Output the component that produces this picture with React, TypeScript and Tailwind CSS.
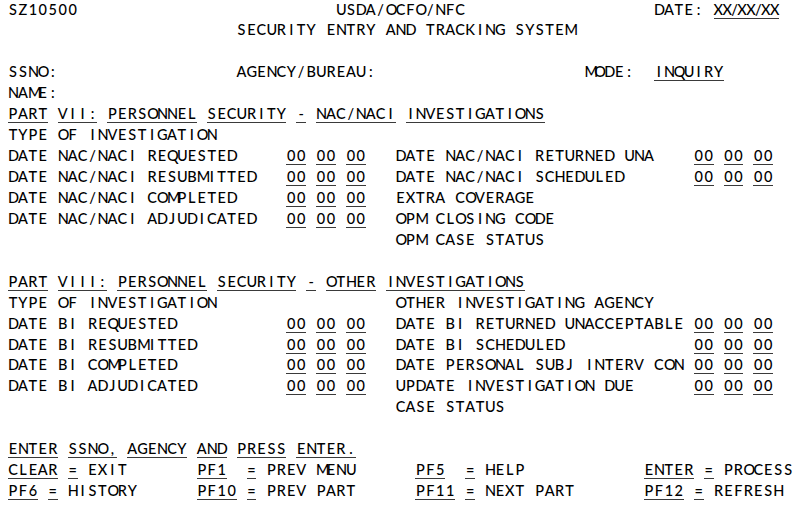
type Field = [number, string, boolean?, boolean?];

// 3270-style screen: [column, text, underlined, proportional]
const rows: Field[][] = [
  [[0, 'SZ10500'], [33, 'USDA/OCFO/NFC'], [65, 'DATE:'], [71, 'XX/XX/XX', true, true]],
  [[23, 'SECURITY ENTRY AND TRACKING SYSTEM']],
  [],
  [[0, 'SSNO:'], [23, 'AGENCY/BUREAU:'], [58, 'MODE:'], [65, 'INQUIRY', true]],
  [[0, 'NAME:']],
  [[0, 'PART VII: PERSONNEL SECURITY - NAC/NACI INVESTIGATIONS', true]],
  [[0, 'TYPE OF INVESTIGATION']],
  [[0, 'DATE NAC/NACI REQUESTED'], [28, '00 00 00', true], [39, 'DATE NAC/NACI RETURNED UNA'], [69, '00 00 00', true]],
  [[0, 'DATE NAC/NACI RESUBMITTED'], [28, '00 00 00', true], [39, 'DATE NAC/NACI SCHEDULED'], [69, '00 00 00', true]],
  [[0, 'DATE NAC/NACI COMPLETED'], [28, '00 00 00', true], [39, 'EXTRA COVERAGE']],
  [[0, 'DATE NAC/NACI ADJUDICATED'], [28, '00 00 00', true], [39, 'OPM CLOSING CODE']],
  [[39, 'OPM CASE STATUS']],
  [],
  [[0, 'PART VIII: PERSONNEL SECURITY - OTHER INVESTIGATIONS', true]],
  [[0, 'TYPE OF INVESTIGATION'], [39, 'OTHER INVESTIGATING AGENCY']],
  [[0, 'DATE BI REQUESTED'], [28, '00 00 00', true], [39, 'DATE BI RETURNED UNACCEPTABLE'], [69, '00 00 00', true]],
  [[0, 'DATE BI RESUBMITTED'], [28, '00 00 00', true], [39, 'DATE BI SCHEDULED'], [69, '00 00 00', true]],
  [[0, 'DATE BI COMPLETED'], [28, '00 00 00', true], [39, 'DATE PERSONAL SUBJ INTERV CON'], [69, '00 00 00', true]],
  [[0, 'DATE BI ADJUDICATED'], [28, '00 00 00', true], [39, 'UPDATE INVESTIGATION DUE'], [69, '00 00 00', true]],
  [[39, 'CASE STATUS']],
  [],
  [[0, 'ENTER SSNO, AGENCY AND PRESS ENTER.', true]],
  [
    [0, 'CLEAR', true], [6, '=', true], [8, 'EXIT'],
    [19, 'PF1', true], [24, '=', true], [26, 'PREV MENU'],
    [41, 'PF5', true], [46, '=', true], [48, 'HELP'],
    [64, 'ENTER', true], [70, '=', true], [72, 'PROCESS'],
  ],
  [
    [0, 'PF6', true], [4, '=', true], [6, 'HISTORY'],
    [19, 'PF10', true], [24, '=', true], [26, 'PREV PART'],
    [41, 'PF11', true], [46, '=', true], [48, 'NEXT PART'],
    [64, 'PF12', true], [69, '=', true], [71, 'REFRESH'],
  ],
];

type Word = { col: number; text: string; under: boolean; tight: boolean };

// split each field into words so every word sits on its own column
const toWords = (fields: Field[]): Word[] => {
  const out: Word[] = [];
  fields.forEach(([col, text, under = false, tight = false]) => {
    if (tight) {
      out.push({ col, text, under, tight });
      return;
    }
    let i = 0;
    while (i < text.length) {
      if (text[i] === ' ') {
        i++;
        continue;
      }
      let j = i;
      while (j < text.length && text[j] !== ' ') j++;
      out.push({ col: col + i, text: text.slice(i, j), under, tight });
      i = j;
    }
  });
  return out;
};

const ScreenRow = ({ fields }: { fields: Field[] }) => (
  <div className="grid h-[20.95px] grid-cols-[repeat(80,9.94px)] items-start pl-2">
    {toWords(fields).map((w) => (
      <span
        key={w.col}
        className={`row-start-1 flex pt-[1.5px] leading-[16px] whitespace-nowrap ${
          w.tight ? 'justify-self-start tracking-[-0.6px]' : ''
        } ${w.under ? 'border-b-[1.5px] border-[#3a3a3a]' : ''}`}
        style={{ gridColumn: `${w.col + 1} / span ${w.text.length}` }}
      >
        {w.tight
          ? w.text
          : w.text.split('').map((ch, k) => (
              <span key={k} className="inline-block w-[9.94px] shrink-0 text-center">
                {ch}
              </span>
            ))}
      </span>
    ))}
  </div>
);

export default function App() {
  return (
    <div className="h-[506px] w-[800px] overflow-hidden bg-white font-['Lato','Open_Sans',sans-serif] text-[14.5px] font-medium text-black">
      {rows.map((fields, i) => (
        <ScreenRow key={i} fields={fields} />
      ))}
    </div>
  );
}
